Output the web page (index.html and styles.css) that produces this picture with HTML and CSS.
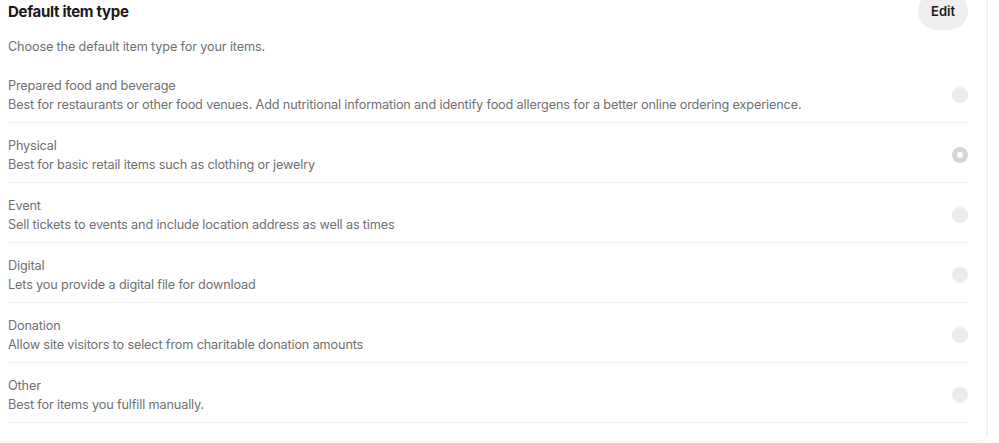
FILE: index.html
```html
<!DOCTYPE html>
<html lang="en">
<head>
    <meta charset="UTF-8">
    <meta name="viewport" content="width=device-width, initial-scale=1.0">
    <title>Default item type</title>
    <link rel="stylesheet" href="styles.css">
</head>
<body>
    <div class="card">
        <div class="card-header">
            <h2>Default item type</h2>
            <button class="edit-btn">Edit</button>
        </div>
        <p class="subtitle">Choose the default item type for your items.</p>

        <!-- Item type options -->
        <ul class="options">
            <li class="option">
                <div class="option-text">
                    <span class="option-title">Prepared food and beverage</span>
                    <span class="option-desc">Best for restaurants or other food venues. Add nutritional information and identify food allergens for a better online ordering experience.</span>
                </div>
                <span class="radio"></span>
            </li>
            <li class="option">
                <div class="option-text">
                    <span class="option-title">Physical</span>
                    <span class="option-desc">Best for basic retail items such as clothing or jewelry</span>
                </div>
                <span class="radio checked"></span>
            </li>
            <li class="option">
                <div class="option-text">
                    <span class="option-title">Event</span>
                    <span class="option-desc">Sell tickets to events and include location address as well as times</span>
                </div>
                <span class="radio"></span>
            </li>
            <li class="option">
                <div class="option-text">
                    <span class="option-title">Digital</span>
                    <span class="option-desc">Lets you provide a digital file for download</span>
                </div>
                <span class="radio"></span>
            </li>
            <li class="option">
                <div class="option-text">
                    <span class="option-title">Donation</span>
                    <span class="option-desc">Allow site visitors to select from charitable donation amounts</span>
                </div>
                <span class="radio"></span>
            </li>
            <li class="option">
                <div class="option-text">
                    <span class="option-title">Other</span>
                    <span class="option-desc">Best for items you fulfill manually.</span>
                </div>
                <span class="radio"></span>
            </li>
        </ul>
    </div>
</body>
</html>
```

FILE: styles.css
```css
body {
    font-family: Inter, "Liberation Sans", sans-serif;
    margin: 0;
    background-color: #ffffff;
    overflow: hidden;
}
.card {
    width: 1008px;
    margin: -32px 0 0 -20px;
    padding: 23px 19px 18px 27px;
    border: 1px solid #ececec;
    border-radius: 10px;
    box-sizing: border-box;
}
.card-header {
    display: flex;
    justify-content: space-between;
    align-items: center;
    height: 38px;
}
.card-header h2 {
    margin: 0;
    font-size: 15px;
    font-weight: 700;
    color: #1a1a1a;
    letter-spacing: -0.3px;
}
.edit-btn {
    height: 38px;
    padding: 0 13px;
    font-family: inherit;
    font-size: 13px;
    font-weight: 600;
    color: #1a1a1a;
    background-color: #efefef;
    border: none;
    border-radius: 19px;
    cursor: pointer;
}
.subtitle {
    margin: 7px 0 7px;
    font-size: 12.7px;
    letter-spacing: -0.15px;
    line-height: 19px;
    color: #707070;
}
.options {
    list-style: none;
    margin: 0;
    padding: 0;
}
.option {
    display: flex;
    align-items: center;
    justify-content: space-between;
    padding: 13px 0 8px;
    border-bottom: 1px solid #f0f0f0;
}
.option-text {
    display: flex;
    flex-direction: column;
    font-size: 12.7px;
    letter-spacing: -0.15px;
    line-height: 19px;
    color: #707070;
}
.radio {
    width: 16px;
    height: 16px;
    border-radius: 50%;
    background-color: #ececec;
    flex-shrink: 0;
    position: relative;
}
.radio.checked {
    background-color: #d6d6d6;
}
.radio.checked::after {
    content: "";
    position: absolute;
    top: 5px;
    left: 5px;
    width: 6px;
    height: 6px;
    border-radius: 50%;
    background-color: #ffffff;
}
```
